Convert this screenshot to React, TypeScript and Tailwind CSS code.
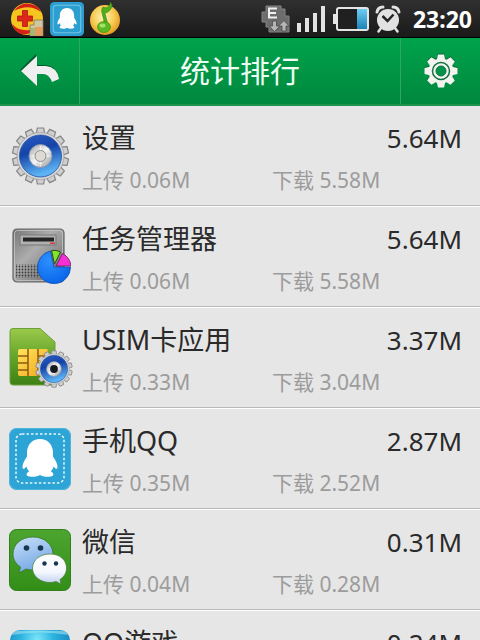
import React from 'react';

interface AppTraffic {
  name: string;
  total: string;
  upload: string;
  download: string;
  icon: React.ReactNode;
}

function rotations(count: number) {
  return Array.from({ length: count }, (_, i) => (i * 360) / count);
}

const PENGUIN =
  'M31 11c-8 0-13 6-13 13.500v4c-2 3-4.500 7-4.500 10.500 0 2 1 2.500 2.500 1l1.500-1.500c.5 2 1.500 3.500 2.500 5-3 1.500-3.500 4.500 .5 5 4 .6 8 .2 10.500-1.500 2.500 1.700 6.500 2.100 10.500 1.500 4-.5 3.500-3.500 .5-5 1-1.500 2-3 2.500-5l1.500 1.500c1.500 1.500 2.500 1 2.500-1 0-3.500-2.500-7.500-4.500-10.500v-4c0-7.500-5-13.500-13-13.500z';

function BlueGear({ id }: { id: string }) {
  return (
    <g>
      <defs>
        <linearGradient id={`${id}-blue`} x1="0" y1="0" x2="0.3" y2="1">
          <stop offset="0" stopColor="#2c5fc4" />
          <stop offset="0.45" stopColor="#1443a8" />
          <stop offset="1" stopColor="#5cb4f4" />
        </linearGradient>
        <linearGradient id={`${id}-steel`} x1="0" y1="0" x2="1" y2="1">
          <stop offset="0" stopColor="#a5a5a5" />
          <stop offset="0.5" stopColor="#f4f4f4" />
          <stop offset="1" stopColor="#909090" />
        </linearGradient>
      </defs>
      {rotations(14).map((deg) => (
        <path
          key={deg}
          d="M-4.500-20L-3.200-28h6.400L4.500-20z"
          transform={`rotate(${deg})`}
          fill="#cfcfcf"
          stroke="#858585"
          strokeWidth="1.200"
        />
      ))}
      <circle r="23.500" fill="#d6d6d6" stroke="#a2a2a2" strokeWidth="0.800" />
      <circle r="21" fill={`url(#${id}-blue)`} stroke="#2751a0" strokeWidth="0.800" />
      <circle r="11.500" fill={`url(#${id}-steel)`} stroke="#7d92b5" />
      <path d="M-11 0L0-3 11 0 0 3zM0-11L3 0 0 11-3 0z" fill="#ffffff" opacity="0.600" />
    </g>
  );
}

function SettingsAppIcon() {
  return (
    <svg viewBox="0 0 62 62" className="size-full" aria-hidden="true">
      <g transform="translate(31.500 31)">
        <BlueGear id="settings" />
        <circle r="5.500" fill="#dedbd4" stroke="#8d8d8d" />
      </g>
    </svg>
  );
}

function TaskManagerIcon() {
  return (
    <svg viewBox="0 0 62 62" className="size-full" aria-hidden="true">
      <defs>
        <linearGradient id="case" x1="0" y1="0" x2="1" y2="1">
          <stop offset="0" stopColor="#757575" />
          <stop offset="0.4" stopColor="#adadad" />
          <stop offset="1" stopColor="#606060" />
        </linearGradient>
        <pattern id="vents" width="3" height="3" patternUnits="userSpaceOnUse">
          <circle cx="1.500" cy="1.500" r="0.900" fill="#3d3d3d" />
        </pattern>
        <radialGradient id="pie" cx="0.35" cy="0.3" r="0.8">
          <stop offset="0" stopColor="#2d90ff" />
          <stop offset="1" stopColor="#0562e8" />
        </radialGradient>
      </defs>
      <rect x="4" y="3" width="51" height="53" rx="4" fill="url(#case)" stroke="#666666" strokeWidth="1.200" />
      <rect x="5.500" y="4.500" width="48" height="50" rx="3" fill="none" stroke="#c6c6c6" strokeWidth="0.800" />
      <rect x="11" y="9" width="36" height="10" fill="#b0b0b0" stroke="#777777" />
      <rect x="14" y="11.500" width="31" height="4" fill="#252525" />
      <rect x="41" y="16.500" width="5" height="1.500" fill="#d83a3a" />
      <rect x="7" y="38" width="30" height="14" fill="url(#vents)" />
      <path d="M45 41L41.500 25A16.500 16.500 0 1 0 61.500 41z" fill="url(#pie)" stroke="#0b4fb3" strokeWidth="0.800" />
      <path d="M45.500 38L42.500 24.500Q47 23.500 51.500 26z" fill="#83e32a" stroke="#2c4d19" />
      <path d="M47 40L53.500 27.500A16 16 0 0 1 62 40z" fill="#f52fd3" stroke="#5e2054" strokeWidth="0.800" />
    </svg>
  );
}

function SimIcon() {
  return (
    <svg viewBox="0 0 62 62" className="size-full overflow-visible" aria-hidden="true">
      <defs>
        <linearGradient id="sim" x1="0" y1="0" x2="0" y2="1">
          <stop offset="0" stopColor="#9bc94a" />
          <stop offset="0.5" stopColor="#64a52a" />
          <stop offset="1" stopColor="#3d8014" />
        </linearGradient>
        <linearGradient id="chip" x1="0" y1="0" x2="1" y2="1">
          <stop offset="0" stopColor="#ffe45d" />
          <stop offset="1" stopColor="#f0a51a" />
        </linearGradient>
      </defs>
      <path d="M4 1.500h27L46 15v40q0 3-3 3H4q-3 0-3-3V4.500q0-3 3-3z" fill="url(#sim)" stroke="#6ba03a" />
      <rect x="9" y="22" width="30" height="27" rx="2" fill="url(#chip)" />
      <path d="M9 29h10M9 36h10M9 43h10M19 22v27M29 22v27M29 29h10" stroke="#8d5a12" strokeWidth="1.500" fill="none" />
      <g transform="translate(45 42) scale(0.650)">
        <BlueGear id="sim-gear" />
        <circle r="6" fill="#16191f" />
      </g>
    </svg>
  );
}

function QQIcon() {
  return (
    <svg viewBox="0 0 62 62" className="size-full" aria-hidden="true">
      <rect width="62" height="62" rx="8" fill="#2ca5d6" />
      <rect x="0.500" y="0.500" width="61" height="61" rx="8" fill="none" stroke="#51b3da" />
      <rect x="7" y="6" width="48" height="49" rx="6" fill="none" stroke="#e6f6fc" strokeWidth="1.500" strokeDasharray="2.500 2" />
      <path d={PENGUIN} fill="#ffffff" />
    </svg>
  );
}

function WeChatIcon() {
  return (
    <svg viewBox="0 0 62 62" className="size-full" aria-hidden="true">
      <defs>
        <linearGradient id="wx" x1="0" y1="0" x2="0" y2="1">
          <stop offset="0" stopColor="#4ba52e" />
          <stop offset="1" stopColor="#338e18" />
        </linearGradient>
        <linearGradient id="wx-back" x1="0" y1="0" x2="0.4" y2="1">
          <stop offset="0" stopColor="#c9e0fa" />
          <stop offset="1" stopColor="#75a8e4" />
        </linearGradient>
        <linearGradient id="wx-front" x1="0" y1="0" x2="0" y2="1">
          <stop offset="0" stopColor="#ffffff" />
          <stop offset="0.6" stopColor="#f4f7ff" />
          <stop offset="1" stopColor="#bfd0ef" />
        </linearGradient>
      </defs>
      <rect x="0.500" y="0.500" width="61" height="61" rx="7" fill="url(#wx)" stroke="#327d1c" />
      <path d="M24 8C12 8 4 15.500 4 25c0 5.500 3 10 7.500 13L10 44l7-4c2 .7 4.500 1 7 1 12 0 20-7 20-16S36 8 24 8z" fill="url(#wx-back)" stroke="#39761f" strokeWidth="0.800" />
      <path d="M41 25c-10 0-17.500 6-17.500 14S31 53.500 41 53.500c2 0 4-.3 6-1l5 2.500-1-4.500c4-2.500 6.500-6.500 6.500-11.500 0-8-6.500-14-16.500-14z" fill="url(#wx-front)" stroke="#4d843b" strokeWidth="0.800" />
      <g fill="#173650">
        <circle cx="17.500" cy="19" r="2.800" />
        <circle cx="31.500" cy="19" r="2.800" />
        <circle cx="35.500" cy="34.500" r="2.200" />
        <circle cx="47" cy="34.500" r="2.200" />
      </g>
    </svg>
  );
}

function QQGameIcon() {
  return (
    <svg viewBox="0 0 62 62" className="size-full" aria-hidden="true">
      <defs>
        <radialGradient id="game" cx="0.45" cy="0.15" r="0.6">
          <stop offset="0" stopColor="#7be6fb" />
          <stop offset="0.45" stopColor="#2cb4df" />
          <stop offset="1" stopColor="#1684c0" />
        </radialGradient>
      </defs>
      <rect x="1" width="60" height="62" rx="10" fill="url(#game)" />
      <path d="M9 1h44q4 0 6 4-28-5-56 0 2-4 6-4z" fill="#b5e9f5" opacity="0.500" />
    </svg>
  );
}

const APPS: AppTraffic[] = [
  { name: '设置', total: '5.64M', upload: '0.06M', download: '5.58M', icon: <SettingsAppIcon /> },
  { name: '任务管理器', total: '5.64M', upload: '0.06M', download: '5.58M', icon: <TaskManagerIcon /> },
  { name: 'USIM卡应用', total: '3.37M', upload: '0.33M', download: '3.04M', icon: <SimIcon /> },
  { name: '手机QQ', total: '2.87M', upload: '0.35M', download: '2.52M', icon: <QQIcon /> },
  { name: '微信', total: '0.31M', upload: '0.04M', download: '0.28M', icon: <WeChatIcon /> },
  { name: 'QQ游戏', total: '0.24M', upload: '0.02M', download: '0.22M', icon: <QQGameIcon /> },
];

function StatusBar() {
  return (
    <div className="flex h-[38px] shrink-0 items-center justify-between border-b border-black bg-linear-to-b from-[#303030] to-[#1a1a1a] pr-2 pl-2.5">
      <div className="flex items-center gap-1.5">
        <svg viewBox="0 0 34 34" className="size-[34px]" aria-hidden="true">
          <circle cx="17" cy="17" r="16" fill="#f7c51f" />
          <path d="M4 9Q12-2 24 3q5 2 7 7-12-9-27-1z" fill="#d32117" />
          <path d="M2 22q8 9 23 5-6 7-14 5-7-3-9-10z" fill="#d32117" />
          <path d="M12.500 8.500h5v5.500h5v5h-5v5.500h-5V19h-5v-5h5z" fill="#dc281b" stroke="#b01810" strokeWidth="0.800" />
          <path d="M24 18h9v16H20V23h4z" fill="#d0c7a2" stroke="#807a62" strokeWidth="0.800" />
          <path d="M25 25h8v9h-8z" fill="#e98d3c" opacity="0.700" />
          <path d="M20 26h5v8h-5z" fill="#92b168" opacity="0.700" />
        </svg>
        <svg viewBox="0 0 62 62" className="size-[34px]" aria-hidden="true">
          <rect width="62" height="62" rx="8" fill="#2c9fd0" />
          <rect x="6" y="6" width="50" height="50" rx="6" fill="none" stroke="#72c3e4" strokeWidth="2" />
          <path d={PENGUIN} fill="#ffffff" />
        </svg>
        <svg viewBox="0 0 32 34" className="h-[34px] w-8" aria-hidden="true">
          <defs>
            <radialGradient id="music" cx="0.45" cy="0.4" r="0.6">
              <stop offset="0" stopColor="#fff6c0" />
              <stop offset="0.6" stopColor="#f8cb52" />
              <stop offset="1" stopColor="#e49b22" />
            </radialGradient>
          </defs>
          <circle cx="15" cy="18" r="15" fill="url(#music)" />
          <path d="M13 5q4 2 6-1 2-3 1-4 4 3 0 8-2 3-5 3l3 12h-3L12 11q-1-4 1-6z" fill="#4fae1a" stroke="#38840f" strokeWidth="0.600" />
          <ellipse cx="14" cy="25" rx="6.500" ry="5.500" fill="#5bb822" stroke="#38840f" strokeWidth="0.600" />
          <ellipse cx="12.500" cy="23.500" rx="3" ry="2" fill="#a3e266" />
        </svg>
      </div>
      <div className="flex items-center gap-1.5">
        <svg viewBox="0 0 30 28" className="h-7 w-[30px]" aria-hidden="true">
          <path d="M5 1h15v3h4v7h4v16H8v-5H5v-5H1V7h4z" fill="#6d6d6d" stroke="#858585" />
          <path d="M7 3.500h9M7 8h8M7 12.500h9M8 3v10" stroke="#f0f0f0" strokeWidth="2" fill="none" />
          <path d="M11.500 16h4v5H19l-5.500 5.500L8 21h3.500z" fill="#b5b5b5" stroke="#4a4a4a" strokeWidth="0.800" />
          <path d="M21 26h4v-5h3l-5-5.500-5.500 5.500H21z" fill="#b5b5b5" stroke="#4a4a4a" strokeWidth="0.800" />
        </svg>
        <svg viewBox="0 0 30 26" className="h-[26px] w-[30px]" fill="#e2e2e2" aria-hidden="true">
          <rect x="0" y="17" width="4" height="9" />
          <rect x="8" y="12" width="4" height="14" />
          <rect x="16" y="7" width="4" height="19" />
          <rect x="24" y="0" width="4" height="26" />
        </svg>
        <svg viewBox="0 0 36 26" className="h-[26px] w-9" aria-hidden="true">
          <defs>
            <linearGradient id="cell" x1="0" y1="0" x2="0" y2="1">
              <stop offset="0" stopColor="#6fcdf2" />
              <stop offset="1" stopColor="#1b83b8" />
            </linearGradient>
          </defs>
          <rect x="0" y="8" width="4" height="10" fill="#e5e5e5" />
          <rect x="4" y="2" width="31" height="22" rx="2" fill="#202020" stroke="#e5e5e5" strokeWidth="2" />
          <rect x="24" y="3" width="10" height="20" fill="url(#cell)" />
        </svg>
        <svg viewBox="0 0 26 28" className="h-7 w-[26px]" aria-hidden="true">
          <g stroke="#e2e2e2" strokeLinecap="round" fill="none">
            <path d="M2 7q1-5 6-5M24 7q-1-5-6-5" strokeWidth="3" />
            <path d="M6 23l-2.500 3.500M20 23l2.500 3.500" strokeWidth="2.500" />
          </g>
          <circle cx="13" cy="15" r="11" fill="#e2e2e2" />
          <path d="M7.500 11l5 5 6-6.500" stroke="#252525" strokeWidth="2.500" fill="none" />
        </svg>
        <time className="ml-1.5 text-[23px] leading-8 font-bold text-white">23:20</time>
      </div>
    </div>
  );
}

function Header() {
  return (
    <header className="flex h-[68px] shrink-0 items-stretch border-b-2 border-[#20934f] bg-linear-to-b from-[#00a34c] to-[#00883e]">
      <button type="button" aria-label="返回" className="flex w-20 items-center justify-center border-r border-[#2fa763]">
        <svg viewBox="0 0 40 34" className="h-[34px] w-10" aria-hidden="true">
          <path d="M0 16L16 0v11h9q12 1 13 13l-6 3q-3-7-9-7h-7v11z" fill="#08582d" />
          <path d="M1 17L17 2v10h9q11 1 13 13l-7 3q-3-8-9-8h-6v12z" fill="#efefef" />
        </svg>
      </button>
      <h1 className="flex flex-1 items-center justify-center text-[30px] leading-10 text-[#eefff4]">统计排行</h1>
      <button type="button" aria-label="设置" className="flex w-20 items-center justify-center border-l border-[#2fa763]">
        <svg viewBox="-18 -18 36 36" className="size-9" aria-hidden="true">
          {[
            { fill: '#0a6534', y: -1 },
            { fill: '#f3f3ef', y: 0 },
          ].map((layer) => (
            <g key={layer.fill} fill={layer.fill} transform={`translate(0 ${layer.y})`}>
              {rotations(8).map((deg) => (
                <path key={deg} d="M-4.500-10L-3-16.500h6L4.500-10z" transform={`rotate(${deg})`} />
              ))}
              <circle r="12.500" />
            </g>
          ))}
          <circle r="8.500" fill="#f3f3ef" stroke="#12713f" strokeWidth="1.500" />
          <circle r="5" fill="#00944a" stroke="#12713f" />
        </svg>
      </button>
    </header>
  );
}

function AppRow({ app }: { app: AppTraffic }) {
  return (
    <li className="border-b border-white">
      <div className="flex h-[100px] items-center border-b border-[#b9b9b9] pr-[18px] pl-[9px]">
        <div className="size-[62px] shrink-0">{app.icon}</div>
        <div className="ml-[11px] grid flex-1 grid-cols-2 gap-y-1.5 pt-1.5 whitespace-nowrap">
          <h2 className="text-[27px] leading-9 text-[#2a2a2a]">{app.name}</h2>
          <p className="text-right text-[26px] leading-9 text-[#2a2a2a]">{app.total}</p>
          <p className="text-[21px] leading-9 text-[#9c9c9c]">上传 {app.upload}</p>
          <p className="text-[21px] leading-9 text-[#9c9c9c]">下载 {app.download}</p>
        </div>
      </div>
    </li>
  );
}

export default function App() {
  return (
    <div className="flex h-screen flex-col overflow-hidden bg-[#e6e6e6] font-['Noto_Sans','Noto_Sans_CJK_SC',sans-serif]" lang="zh-CN">
      <StatusBar />
      <Header />
      <main className="min-h-0 flex-1 overflow-hidden">
        <ul className="flex flex-col">
          {APPS.map((app) => (
            <AppRow key={app.name} app={app} />
          ))}
        </ul>
      </main>
    </div>
  );
}
